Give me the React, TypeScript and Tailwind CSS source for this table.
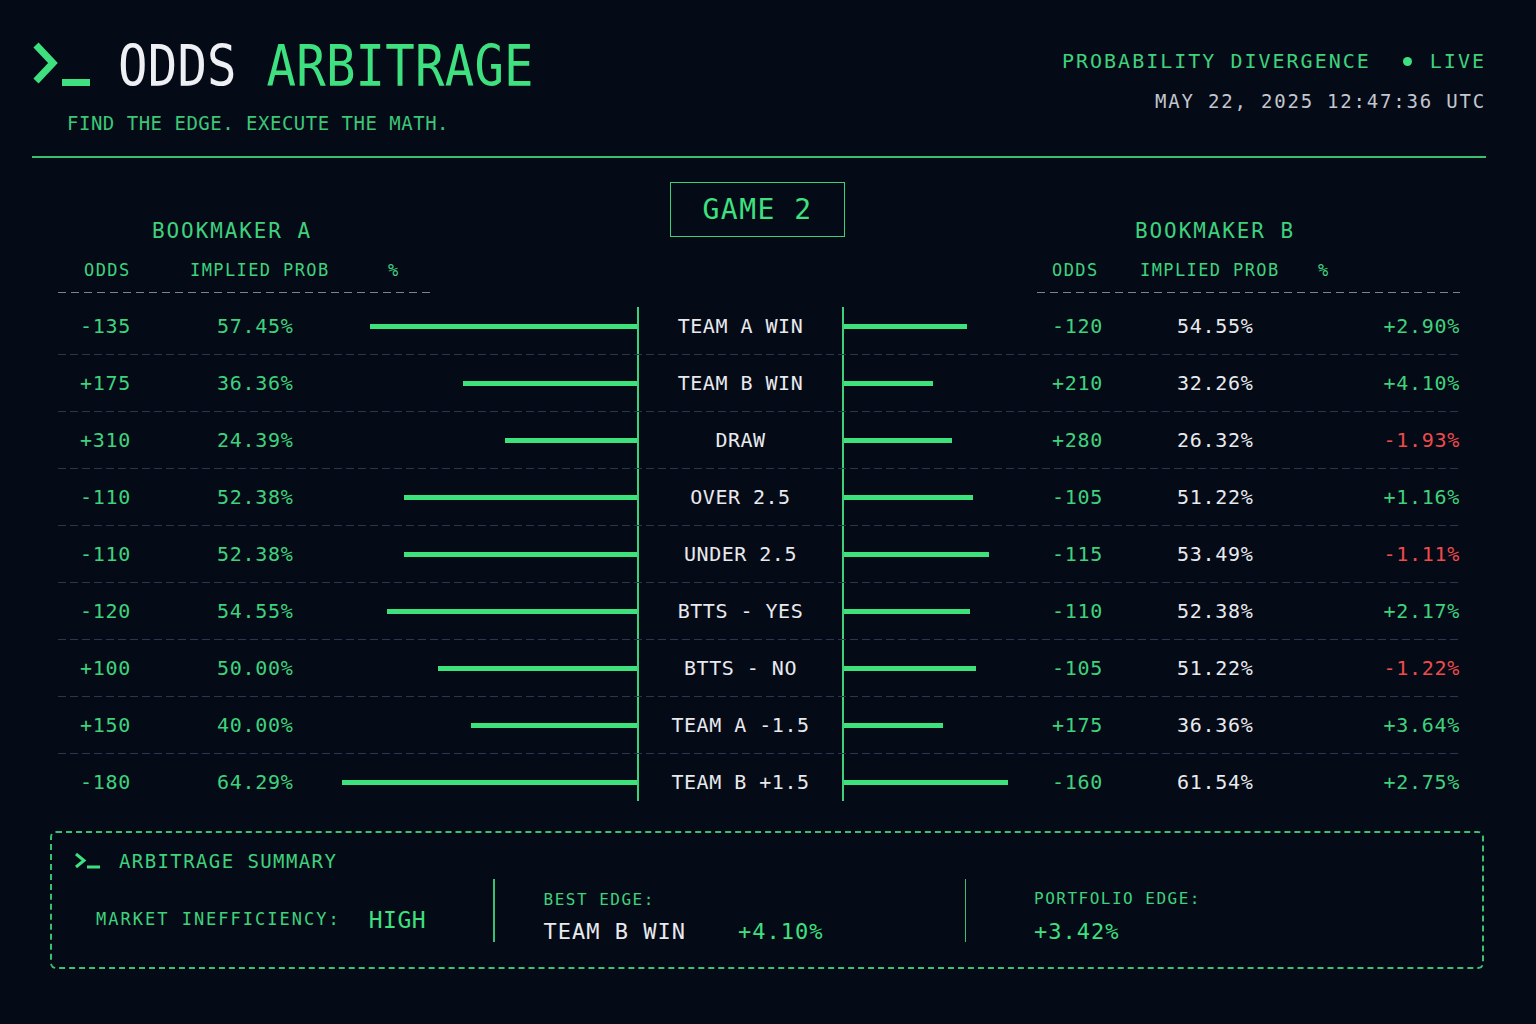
import React from 'react';

type Row = {
  a: string;
  pa: string;
  la: number;
  label: string;
  b: string;
  pb: string;
  lb: number;
  d: string;
  neg?: boolean;
};

const rows: Row[] = [
  { a: '-135', pa: '57.45%', la: 267, label: 'TEAM A WIN', b: '-120', pb: '54.55%', lb: 123, d: '+2.90%' },
  { a: '+175', pa: '36.36%', la: 174, label: 'TEAM B WIN', b: '+210', pb: '32.26%', lb: 89, d: '+4.10%' },
  { a: '+310', pa: '24.39%', la: 132, label: 'DRAW', b: '+280', pb: '26.32%', lb: 108, d: '-1.93%', neg: true },
  { a: '-110', pa: '52.38%', la: 233, label: 'OVER 2.5', b: '-105', pb: '51.22%', lb: 129, d: '+1.16%' },
  { a: '-110', pa: '52.38%', la: 233, label: 'UNDER 2.5', b: '-115', pb: '53.49%', lb: 145, d: '-1.11%', neg: true },
  { a: '-120', pa: '54.55%', la: 250, label: 'BTTS - YES', b: '-110', pb: '52.38%', lb: 126, d: '+2.17%' },
  { a: '+100', pa: '50.00%', la: 199, label: 'BTTS - NO', b: '-105', pb: '51.22%', lb: 132, d: '-1.22%', neg: true },
  { a: '+150', pa: '40.00%', la: 166, label: 'TEAM A -1.5', b: '+175', pb: '36.36%', lb: 99, d: '+3.64%' },
  { a: '-180', pa: '64.29%', la: 295, label: 'TEAM B +1.5', b: '-160', pb: '61.54%', lb: 164, d: '+2.75%' },
];

function Prompt({ small }: { small?: boolean }) {
  if (small) {
    return (
      <svg width="28" height="18" viewBox="0 0 28 18" className="shrink-0">
        <polyline points="2,2 10,8.5 2,15" fill="none" stroke="#3ee07f" strokeWidth="3" />
        <rect x="13" y="13.5" width="13" height="3" fill="#3ee07f" />
      </svg>
    );
  }
  return (
    <svg width="62" height="46" viewBox="0 0 62 46" className="shrink-0">
      <polyline points="4,3 21,21 4,39" fill="none" stroke="#3ee07f" strokeWidth="7" />
      <rect x="30" y="37" width="28" height="7" fill="#3ee07f" />
    </svg>
  );
}

function DashLine({ className }: { className: string }) {
  return <div className={className} />;
}

export default function App() {
  return (
    <div className="w-[1536px] h-[1024px] overflow-hidden bg-[#050a17] font-['DejaVu_Sans_Mono','Liberation_Mono',monospace] text-[#3fd27d] pl-[32px] pr-[50px] pt-[40px]">
      {/* Header */}
      <div className="h-[116px] flex justify-between">
        <div>
          <div className="h-[50px] flex items-center">
            <Prompt />
            <h1 className="ml-[24px] mt-[4px] text-[49px] leading-none tracking-[0.2px] scale-y-[1.15]">
              <span className="text-[#eef0f4]">ODDS</span>{' '}
              <span className="text-[#3ee07f]">ARBITRAGE</span>
            </h1>
          </div>
          <p className="mt-[21px] pl-[35px] text-[19px] leading-6 tracking-[0.5px] text-[#3cc777]">
            FIND THE EDGE. EXECUTE THE MATH.
          </p>
        </div>
        <div className="flex flex-col items-end">
          <div className="mt-[9px] flex items-center leading-6 text-[20px] tracking-[2px] text-[#3fd27d]">
            <span>PROBABILITY DIVERGENCE</span>
            <span className="ml-[32px] mr-[18px] w-[9px] h-[9px] rounded-full bg-[#3ee07f]" />
            <span>LIVE</span>
          </div>
          <div className="mt-[16px] leading-6 text-[19px] tracking-[1.8px] text-[#c2c6ce]">
            MAY 22, 2025 12:47:36 UTC
          </div>
        </div>
      </div>
      <div className="h-[2px] bg-[#3bbf70]" />

      {/* Table */}
      <div className="mt-[24px] mx-[26px]">
        <div className="grid grid-cols-[579px_207px_616px] h-[116px]">
          <div className="flex flex-col">
            <div className="mt-[37px] pl-[94px] leading-6 text-[21px] tracking-[1.9px]">BOOKMAKER A</div>
            <div className="mt-[16px] pl-[26px] flex leading-[22px] text-[17px] tracking-[1.4px]">
              <span className="w-[106px]">ODDS</span>
              <span className="w-[198px]">IMPLIED PROB</span>
              <span>%</span>
            </div>
            <DashLine className="mt-[11px] w-[374px] h-px bg-[linear-gradient(to_right,#7b8290_8px,transparent_8px)] bg-[length:13px_1px]" />
          </div>
          <div>
            <div className="ml-[33px] w-[175px] h-[55px] border-[1.5px] border-[#3ecf7a] flex items-center justify-center text-[28px] tracking-[1.5px] text-[#3ee07f]">
              GAME 2
            </div>
          </div>
          <div className="flex flex-col">
            <div className="mt-[37px] pl-[291px] leading-6 text-[21px] tracking-[1.9px]">BOOKMAKER B</div>
            <div className="mt-[16px] pl-[208px] flex leading-[22px] text-[17px] tracking-[1.4px]">
              <span className="w-[88px]">ODDS</span>
              <span className="w-[178px]">IMPLIED PROB</span>
              <span>%</span>
            </div>
            <DashLine className="mt-[11px] ml-[193px] h-px bg-[linear-gradient(to_right,#7b8290_8px,transparent_8px)] bg-[length:13px_1px]" />
          </div>
        </div>

        <div>
          {rows.map((r, i) => {
            const first = i === 0;
            const last = i === rows.length - 1;
            const vline = first
              ? 'w-[2px] mt-[9px] bg-[#3ed17a]'
              : last
                ? 'w-[2px] mb-[9px] bg-[#3ed17a]'
                : 'w-[2px] bg-[#3ed17a]';
            return (
              <div key={i}>
                <div className="grid grid-cols-[579px_207px_616px] h-[56px] text-[20px] tracking-[0.7px]">
                  <div className="flex items-center pl-[22px]">
                    <span className="w-[137px]">{r.a}</span>
                    <span>{r.pa}</span>
                    <div className="flex-1 flex justify-end">
                      <div className="h-[5px] bg-[#3de27c]" style={{ width: r.la }} />
                    </div>
                  </div>
                  <div className="flex">
                    <div className={vline} />
                    <div className="flex-1 flex items-center justify-center text-[20px] tracking-[0.5px] text-[#e8eaee]">
                      {r.label}
                    </div>
                    <div className={vline} />
                  </div>
                  <div className="flex items-center">
                    <div className="w-[208px]">
                      <div className="h-[5px] bg-[#3de27c]" style={{ width: r.lb }} />
                    </div>
                    <span className="w-[125px]">{r.b}</span>
                    <span className="text-[#e8eaee]">{r.pb}</span>
                    <span className={r.neg ? 'flex-1 text-right text-[#ef4b4b]' : 'flex-1 text-right text-[#3fd27d]'}>{r.d}</span>
                  </div>
                </div>
                {!last && (
                  <DashLine className="h-px bg-[linear-gradient(to_right,#2b374d_8px,transparent_8px)] bg-[length:12px_1px]" />
                )}
              </div>
            );
          })}
        </div>
      </div>

      {/* Summary */}
      <div className="mt-[21px] ml-[18px] mr-[2px] h-[138px] border-2 border-dashed border-[#3bbf70] rounded-[6px] px-[22px] pt-[16px]">
        <div className="flex items-center h-6">
          <Prompt small />
          <span className="ml-[17px] text-[19px] tracking-[1.4px]">ARBITRAGE SUMMARY</span>
        </div>
        <div className="mt-[6px] flex h-[63px]">
          <div className="w-[419px] pl-[22px] flex items-center pt-[19px]">
            <span className="text-[17px] tracking-[2px]">MARKET INEFFICIENCY:</span>
            <span className="ml-[28px] text-[23px] tracking-[0.5px] text-[#3ee07f]">HIGH</span>
          </div>
          <div className="w-[1.5px] bg-[#3bbf70]" />
          <div className="w-[470px] pl-[49px] pt-[11px]">
            <div className="text-[16px] leading-5 tracking-[1.5px]">BEST EDGE:</div>
            <div className="mt-[8px] flex leading-[28px] text-[22px] tracking-[1px]">
              <span className="text-[#e8eaee]">TEAM B WIN</span>
              <span className="ml-[52px] text-[#3ee07f]">+4.10%</span>
            </div>
          </div>
          <div className="w-[1.5px] bg-[#3bbf70]" />
          <div className="pl-[68px] pt-[10px]">
            <div className="text-[16px] leading-5 tracking-[1.5px]">PORTFOLIO EDGE:</div>
            <div className="mt-[9px] leading-[28px] text-[22px] tracking-[1px] text-[#3ee07f]">+3.42%</div>
          </div>
        </div>
      </div>
    </div>
  );
}
